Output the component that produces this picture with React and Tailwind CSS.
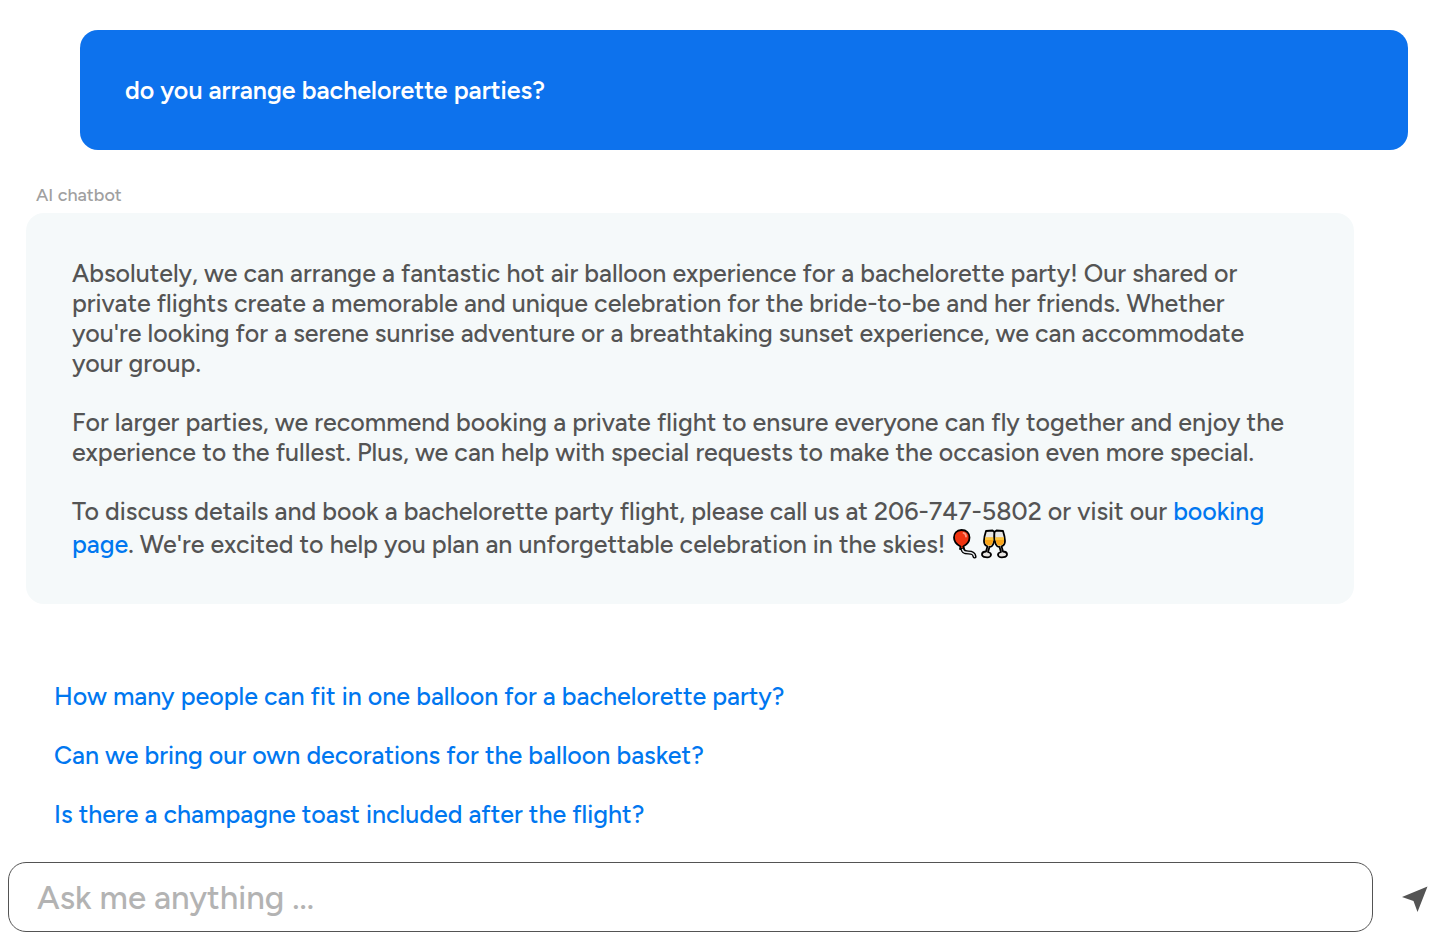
import React from 'react';

const paragraphs = [
  'Absolutely, we can arrange a fantastic hot air balloon experience for a bachelorette party! Our shared or private flights create a memorable and unique celebration for the bride-to-be and her friends. Whether you\'re looking for a serene sunrise adventure or a breathtaking sunset experience, we can accommodate your group.',
  'For larger parties, we recommend booking a private flight to ensure everyone can fly together and enjoy the experience to the fullest. Plus, we can help with special requests to make the occasion even more special.',
];

const suggestions = [
  'How many people can fit in one balloon for a bachelorette party?',
  'Can we bring our own decorations for the balloon basket?',
  'Is there a champagne toast included after the flight?',
];

function Balloon() {
  return (
    <svg viewBox="0 -2 28 34" className="inline-block h-[34px] w-7 align-[-7px]" role="img" aria-label="Balloon">
      <path d="M10.5 20c0 4 3 4.500 6 4.500 4 0 5.500 1 6 4" fill="none" stroke="#000" strokeWidth="4.200" strokeLinecap="round" />
      <path d="M9.500 2C4.500 2 2 5.500 2 9.500c0 4.500 3.500 7.500 6.500 9l-.5 2.500h4l-.8-2.500c3-1.500 6.300-4.500 6.300-9 0-4.500-3-7.500-8-7.500z" fill="#ef3411" stroke="#000" strokeWidth="1.800" strokeLinejoin="round" />
      <path d="M10.500 21.500c.8 3 3 3 6 3 4 0 5.500 1 6 4" fill="none" stroke="#e8ecee" strokeWidth="1.300" strokeLinecap="round" />
      <path d="M11.500 5c1.800.5 2.500 1.800 2.500 3.500" fill="none" stroke="#ff9a85" strokeWidth="1.800" strokeLinecap="round" />
    </svg>
  );
}

function Glass() {
  return (
    <>
      <path d="M6 3l6.500-.5 2 1.500c.5 4 .2 9-1.500 12.500-.8 1.800-2 2.500-3.500 2.500L8 24c2 .5 3.200 1.500 3 3-.3 2-3 2.500-5.500 2.200S1.800 27.500 2 26c.3-1.500 2-2.500 4-2.500l1.500-5.200C5 17.500 4 15.500 4 13c0-3.500 1-7 2-10z" fill="#e8e6e2" stroke="#000" strokeWidth="1.800" strokeLinejoin="round" />
      <path d="M5.300 9.500h8.400c-.2 3-1 6-2.200 7.500-1 1-2.800.8-4 .2-2.800-1.200-2.900-4-2.200-7.700z" fill="#f9a51a" />
      <path d="M5.300 9.500h8.400l-.3 2.500H5z" fill="#fbc63c" />
    </>
  );
}

function Cheers() {
  return (
    <svg viewBox="0 -2 30 34" className="inline-block h-[34px] w-[30px] align-[-7px]" role="img" aria-label="Clinking glasses">
      <Glass />
      <g transform="translate(29 0) scale(-1 1)"><Glass /></g>
    </svg>
  );
}

export default function App() {
  return (
    <main className="flex min-h-screen flex-col bg-white px-2 pt-[30px] pb-5 font-['Figtree','Lato',sans-serif] text-[25px] leading-[30px] font-medium">
      <div className="mr-[33px] ml-[72px] rounded-[18px] bg-[#0d72ed] p-[45px] font-semibold text-white">do you arrange bachelorette parties?</div>
      <p className="mt-8 ml-7 text-lg leading-[27px] text-[#a0a0a0]">AI chatbot</p>
      <article className="mt-1 mr-[87px] ml-[18px] flex flex-col gap-[29px] rounded-[18px] bg-[#f5f9fa] pt-[45px] pr-[60px] pb-11 pl-[46px] text-[#545454]">
        {paragraphs.map((text) => <p key={text}>{text}</p>)}
        <p>
          To discuss details and book a bachelorette party flight, please call us at 206-747-5802 or visit our{' '}
          <a href="#booking" className="text-[#0077f0]">booking page</a>. We're excited to help you plan an unforgettable celebration in the skies! <Balloon /><Cheers />
        </p>
      </article>
      <nav aria-label="Suggested questions" className="mt-[77px] ml-[46px] flex flex-col items-start gap-[29px] text-[#0077f0]">
        {suggestions.map((s) => <button key={s} type="button" className="text-left">{s}</button>)}
      </nav>
      <form className="mt-[33px] flex items-center gap-7" onSubmit={(e) => e.preventDefault()}>
        <input aria-label="Message" placeholder="Ask me anything ..." className="h-[70px] min-w-0 flex-1 rounded-[18px] border border-[#545454] px-7 text-[33px] placeholder:text-[#b3b3b3]" />
        <button type="submit" aria-label="Send" className="mr-3 pt-1"><svg viewBox="0 0 28 28" className="block size-7" fill="#545454"><path d="M26.500 1.500L1 12l11.500 4 4 11z" /></svg></button>
      </form>
    </main>
  );
}
